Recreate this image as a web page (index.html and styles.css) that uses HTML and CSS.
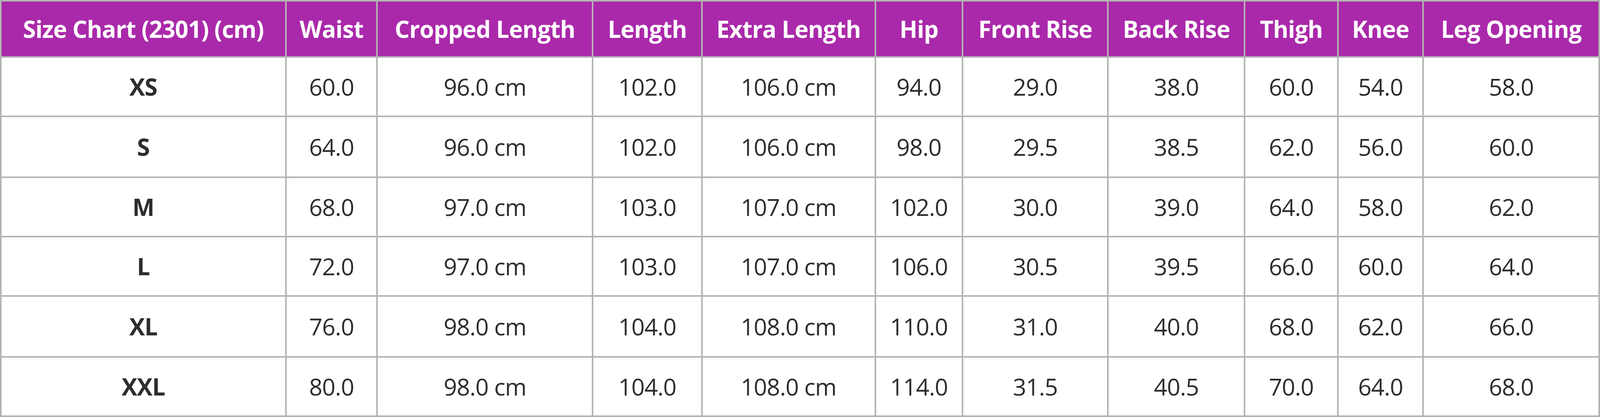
FILE: index.html
```html
<!DOCTYPE html>
<html lang="en">
<head>
<meta charset="utf-8">
<title>Size Chart (2301)</title>
<link rel="stylesheet" href="styles.css">
</head>
<body>
<div class="chart" role="table" aria-label="Size Chart (2301) (cm)">
  <div class="row head" role="row">
    <div class="cell" role="columnheader">Size Chart (2301) (cm)</div>
    <div class="cell" role="columnheader">Waist</div>
    <div class="cell" role="columnheader">Cropped Length</div>
    <div class="cell" role="columnheader">Length</div>
    <div class="cell" role="columnheader">Extra Length</div>
    <div class="cell" role="columnheader">Hip</div>
    <div class="cell" role="columnheader">Front Rise</div>
    <div class="cell" role="columnheader">Back Rise</div>
    <div class="cell" role="columnheader">Thigh</div>
    <div class="cell" role="columnheader">Knee</div>
    <div class="cell" role="columnheader">Leg Opening</div>
  </div>
  <div class="row r152" role="row">
    <div class="cell size" role="rowheader">XS</div>
    <div class="cell">60.0</div><div class="cell">96.0 cm</div><div class="cell">102.0</div><div class="cell">106.0 cm</div><div class="cell">94.0</div><div class="cell">29.0</div><div class="cell">38.0</div><div class="cell">60.0</div><div class="cell">54.0</div><div class="cell">58.0</div>
  </div>
  <div class="row r156" role="row">
    <div class="cell size" role="rowheader">S</div>
    <div class="cell">64.0</div><div class="cell">96.0 cm</div><div class="cell">102.0</div><div class="cell">106.0 cm</div><div class="cell">98.0</div><div class="cell">29.5</div><div class="cell">38.5</div><div class="cell">62.0</div><div class="cell">56.0</div><div class="cell">60.0</div>
  </div>
  <div class="row r152" role="row">
    <div class="cell size" role="rowheader">M</div>
    <div class="cell">68.0</div><div class="cell">97.0 cm</div><div class="cell">103.0</div><div class="cell">107.0 cm</div><div class="cell">102.0</div><div class="cell">30.0</div><div class="cell">39.0</div><div class="cell">64.0</div><div class="cell">58.0</div><div class="cell">62.0</div>
  </div>
  <div class="row r152" role="row">
    <div class="cell size" role="rowheader">L</div>
    <div class="cell">72.0</div><div class="cell">97.0 cm</div><div class="cell">103.0</div><div class="cell">107.0 cm</div><div class="cell">106.0</div><div class="cell">30.5</div><div class="cell">39.5</div><div class="cell">66.0</div><div class="cell">60.0</div><div class="cell">64.0</div>
  </div>
  <div class="row r156" role="row">
    <div class="cell size" role="rowheader">XL</div>
    <div class="cell">76.0</div><div class="cell">98.0 cm</div><div class="cell">104.0</div><div class="cell">108.0 cm</div><div class="cell">110.0</div><div class="cell">31.0</div><div class="cell">40.0</div><div class="cell">68.0</div><div class="cell">62.0</div><div class="cell">66.0</div>
  </div>
  <div class="row r152" role="row">
    <div class="cell size" role="rowheader">XXL</div>
    <div class="cell">80.0</div><div class="cell">98.0 cm</div><div class="cell">104.0</div><div class="cell">108.0 cm</div><div class="cell">114.0</div><div class="cell">31.5</div><div class="cell">40.5</div><div class="cell">70.0</div><div class="cell">64.0</div><div class="cell">68.0</div>
  </div>
</div>
</body>
</html>
```
FILE: styles.css
```css
* { box-sizing: border-box; }
html, body { margin: 0; padding: 0; background: #ffffff; }
body {
  width: 100%;
  height: 1068px;
  overflow: hidden;
  font-family: "Open Sans", "Noto Sans", "Liberation Sans", sans-serif;
  color: #2d2d2d;
}
.chart {
  width: 100%;
  border-top: 4px solid #b4b3b5;
  border-left: 4px solid #b4b3b5;
  display: flex;
  flex-direction: column;
}
.row {
  display: grid;
  grid-template-columns: 784fr 251fr 593fr 300fr 477fr 240fr 400fr 376fr 256fr 235fr 484fr;
  height: 152px;
}
.row.head { height: 144px; background: #aa29aa; }
.row.r156 { height: 156px; }
.cell {
  min-width: 0;
  border-right: 4px solid #b4b3b5;
  border-bottom: 4px solid #b4b3b5;
  display: flex;
  align-items: center;
  justify-content: center;
  font-size: 60px;
  line-height: 1;
  letter-spacing: -1px;
  white-space: nowrap;
}
.head .cell {
  color: #ffffff;
  font-weight: 700;
}
.cell.size { font-weight: 700; }
```
